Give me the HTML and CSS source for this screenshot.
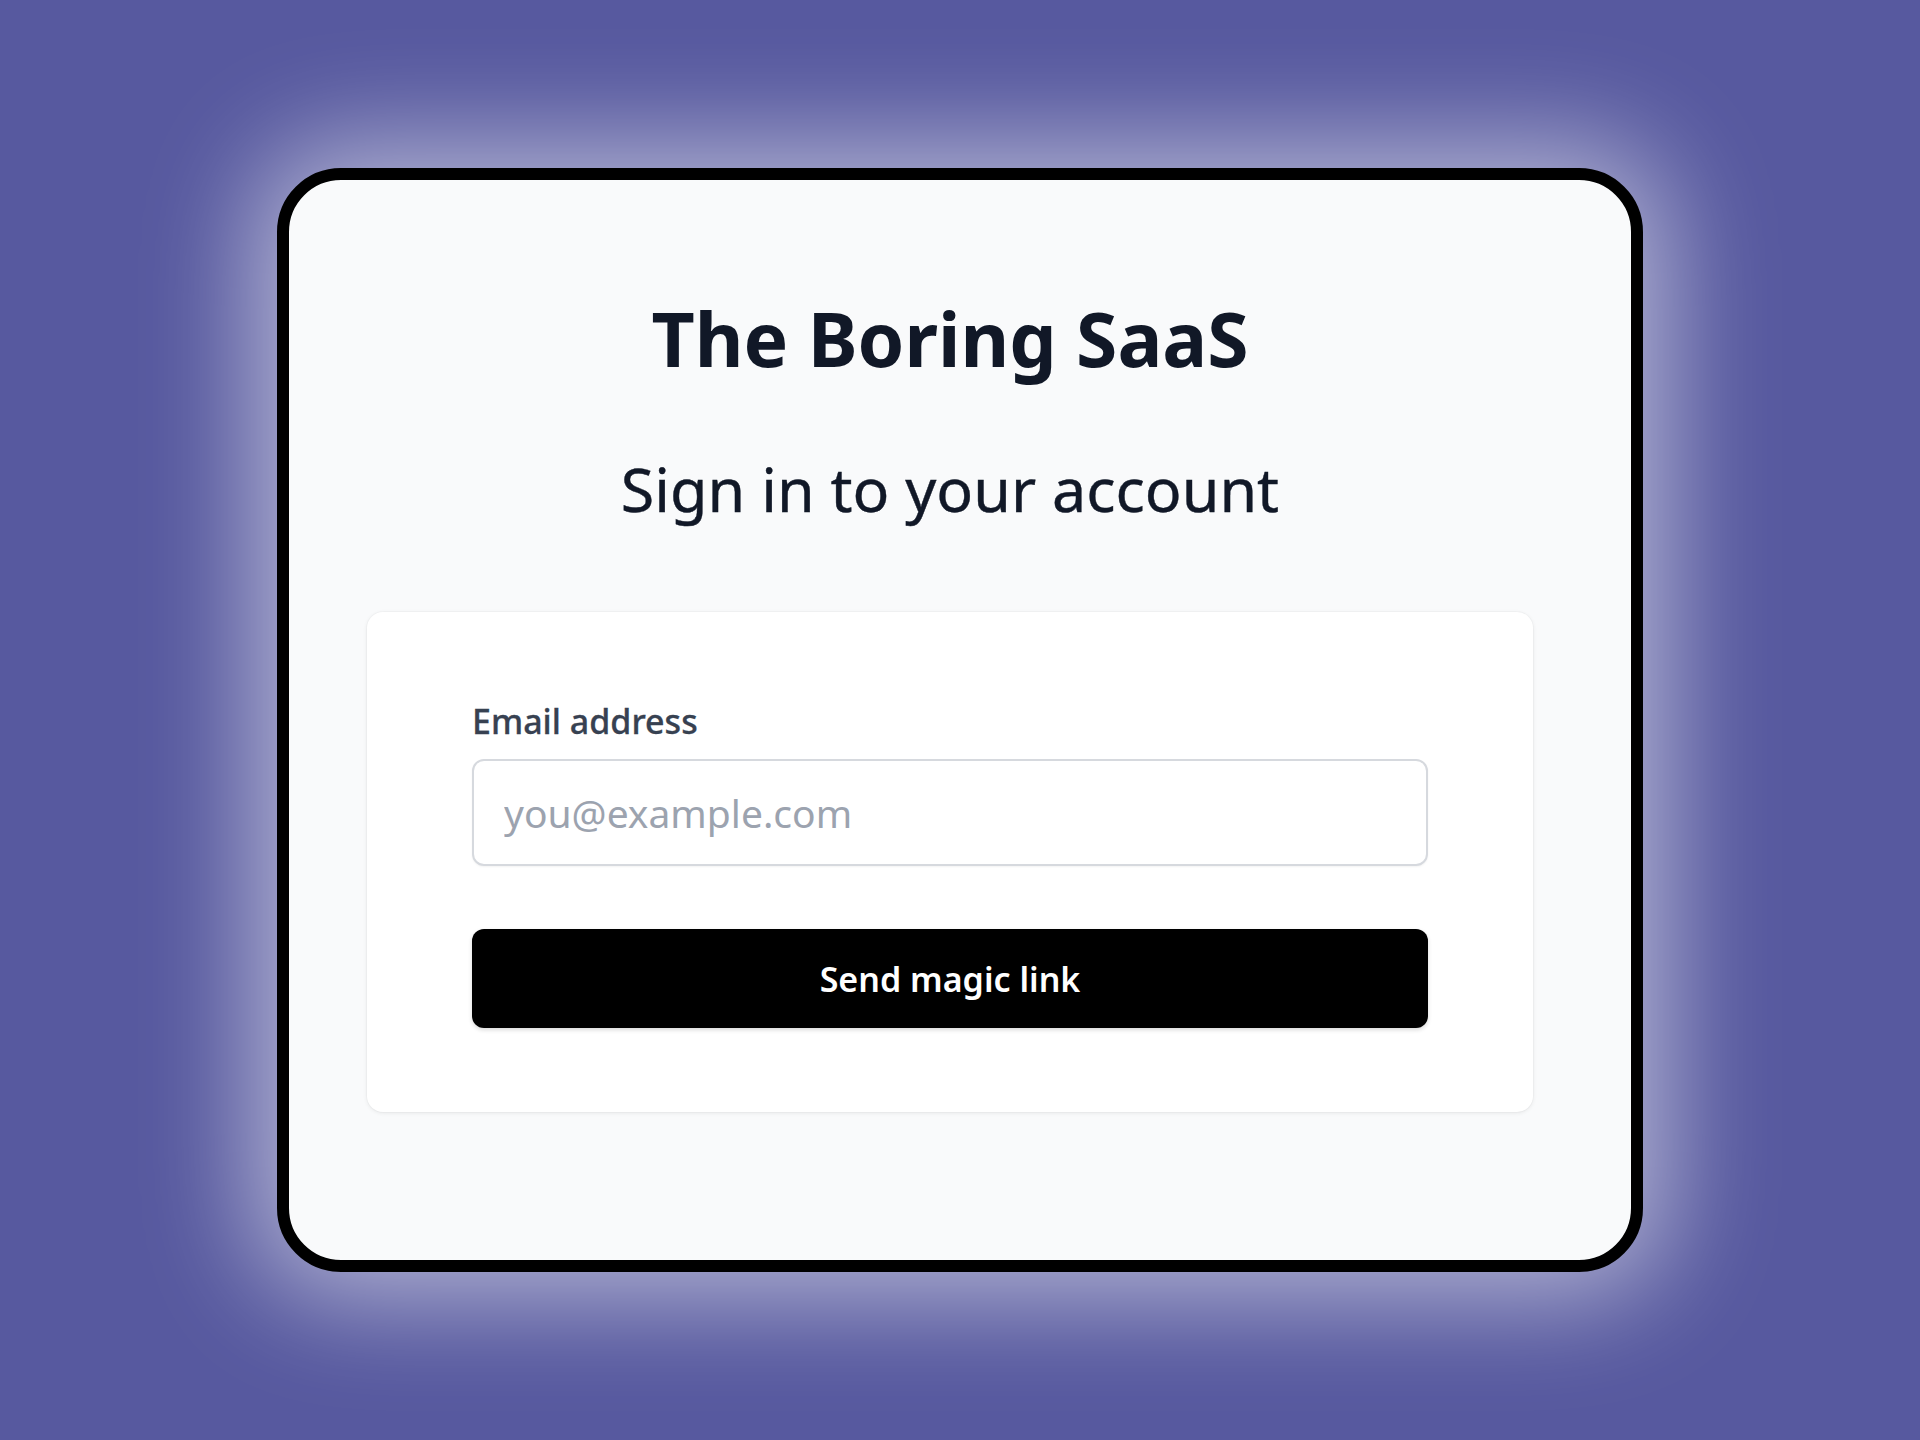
FILE: index.html
```html
<!DOCTYPE html>
<html lang="en">
<head>
<meta charset="utf-8">
<title>The Boring SaaS — Sign in</title>
<link rel="stylesheet" href="styles.css">
</head>
<body>
<main class="stage">
  <div class="frame">
    <div class="page">
      <h1 class="brand">The Boring SaaS</h1>
      <h2 class="subtitle">Sign in to your account</h2>
      <form class="panel" onsubmit="return false">
        <label class="label" for="email">Email address</label>
        <input class="input" id="email" type="email" placeholder="you@example.com">
        <button class="btn" type="submit">Send magic link</button>
      </form>
    </div>
  </div>
</main>
</body>
</html>
```

FILE: styles.css
```css
* { box-sizing: border-box; }

html, body {
  margin: 0;
  padding: 0;
}

body {
  background: #57599f;
  font-family: "Noto Sans", "Open Sans", sans-serif;
}

.stage {
  width: 1920px;
  height: 1440px;
  display: flex;
  align-items: center;
  justify-content: center;
}

.frame {
  width: 1366px;
  height: 1104px;
  border: 12px solid #000;
  border-radius: 64px;
  background: #f9fafb;
  box-shadow: 0 0 110px 25px rgba(255, 255, 255, 0.55);
  overflow: hidden;
}

.page {
  display: flex;
  flex-direction: column;
  align-items: center;
  padding: 113px 20px 0 0;
}

.brand {
  margin: 0;
  font-size: 75px;
  line-height: 90px;
  font-weight: 700;
  color: #111827;
}

.subtitle {
  margin: 70px 0 0;
  font-size: 61px;
  line-height: 72px;
  font-weight: 400;
  color: #111827;
  -webkit-text-stroke: 0.4px #111827;
}

.panel {
  margin-top: 87px;
  width: 1166px;
  background: #fff;
  border-radius: 16px;
  box-shadow: 0 1px 4px rgba(0, 0, 0, 0.08), 0 0 0 1px rgba(0, 0, 0, 0.02);
  padding: 84px 105px 84px;
  display: flex;
  flex-direction: column;
}

.label {
  font-size: 34px;
  line-height: 50px;
  font-weight: 500;
  color: #374151;
  -webkit-text-stroke: 0.3px #374151;
}

.input {
  margin-top: 13px;
  height: 107px;
  width: 100%;
  border: 2px solid #d6d9de;
  border-radius: 12px;
  padding: 0 30px;
  font-family: inherit;
  font-size: 39px;
  color: #111827;
  background: #fff;
  box-shadow: 0 1px 2px rgba(0, 0, 0, 0.05);
  outline: none;
}

.input::placeholder {
  color: #9ca3af;
}

.btn {
  margin-top: 63px;
  height: 99px;
  width: 100%;
  border: 0;
  border-radius: 12px;
  background: #000;
  color: #fff;
  font-family: inherit;
  font-size: 34px;
  font-weight: 600;
  box-shadow: 0 2px 4px rgba(0, 0, 0, 0.15);
  cursor: pointer;
}
```
